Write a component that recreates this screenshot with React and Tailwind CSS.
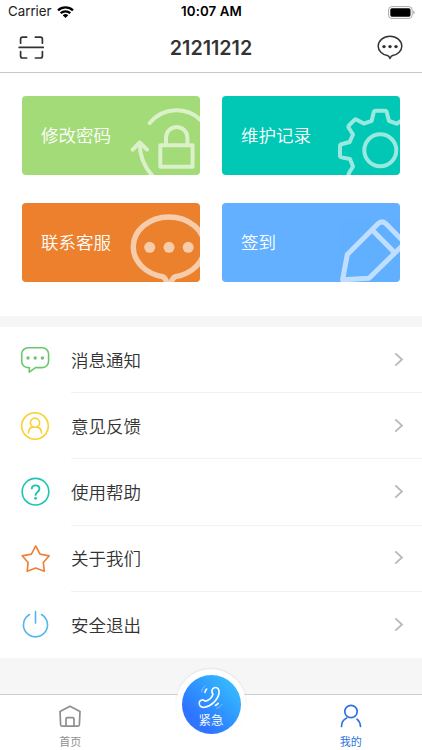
const cards = [
  { label: "修改密码", bg: "bg-[#a3db78]", art: LockArt },
  { label: "维护记录", bg: "bg-[#00c8b4]", art: GearArt },
  { label: "联系客服", bg: "bg-[#ec802d]", art: ChatArt },
  { label: "签到", bg: "bg-[#62b0ff]", art: PencilArt },
];

const rows = [
  { label: "消息通知", icon: MessageIcon },
  { label: "意见反馈", icon: FeedbackIcon },
  { label: "使用帮助", icon: HelpIcon },
  { label: "关于我们", icon: StarIcon },
  { label: "安全退出", icon: PowerIcon },
];

// faded drawing in the right part of a card, cut off by the card edge
function Art({ children }) {
  return (
    <svg
      className="absolute top-0 right-0 h-[79px] w-[78px] opacity-60"
      viewBox="0 0 78 79"
      fill="none"
      stroke="#fff"
      strokeWidth="4"
      strokeLinecap="round"
      strokeLinejoin="round"
    >
      {children}
    </svg>
  );
}

function LockArt() {
  return (
    <Art>
      <path d="M27.7 27A34.6 34.6 0 0 1 80 25.5" />
      <path d="M10.7 53.7l7-7.2 7.3 7.2M17.7 47.5C17.7 61 23 72 31.5 81" />
      <path d="M38.3 49.3h32.3v21.4H38.3zM44 49.3v-7.6a10.7 10.7 0 0 1 21.4 0v7.6" />
    </Art>
  );
}

function GearArt() {
  return (
    <Art>
      <circle cx="58.3" cy="54.3" r="16" />
      <path d="M26 81l1-4 4-6.5-3-7.5-8.5-1.6q-1.5-.4-1.5-1.9v-9.3q0-1.5 1.5-1.9l8.2-2.3 3.3-7.5-4.3-6.8q-.7-1.2.2-2.2l5.6-5.6q1-.9 2.2-.2l7.1 3.9 7.9-2.8 2-8.6q.4-1.5 1.9-1.5h9.3q1.5 0 1.9 1.5l2.1 8.6 7.7 2.9 8-4.8" />
    </Art>
  );
}

function ChatArt() {
  return (
    <Art>
      <path
        strokeWidth="5.4"
        d="M40.5 73.6C23.5 70.5 11.3 58.5 11.3 43.7 11.3 27.3 27.3 14 47 14s35.7 13.3 35.7 29.7c0 14.8-12.2 26.8-29.2 29.9q-3 1-4.5 6.4h-4q-1.5-5.4-4.5-6.4z"
      />
      <g fill="#fff" stroke="none">
        <circle cx="27.7" cy="44.3" r="5.5" />
        <circle cx="47" cy="44.3" r="5.5" />
        <circle cx="66.2" cy="44.3" r="5.5" />
      </g>
    </Art>
  );
}

function PencilArt() {
  return (
    <Art>
      <path
        strokeWidth="5"
        d="M82 39L63.500 20.300q-3.500-3-7 0L25.300 51.500 20.600 76.800 47 75.300 82 41M51.700 28.500L72 49"
      />
    </Art>
  );
}

function MessageIcon() {
  return (
    <svg className="size-[30px]" viewBox="0 0 30 30" fill="none" stroke="#67c96b" strokeWidth="1.6" strokeLinejoin="round">
      <path d="M8 2.800h14.300a6.300 6.300 0 0 1 6.300 6.300v7.200a6.300 6.300 0 0 1-6.300 6.300h-6.800L9.300 27.200v-4.600H8a6.300 6.300 0 0 1-6.300-6.300V9.100A6.300 6.300 0 0 1 8 2.800z" />
      <g fill="#67c96b" stroke="none">
        <circle cx="8" cy="13" r="1.7" />
        <circle cx="15.2" cy="13" r="1.7" />
        <circle cx="22.4" cy="13" r="1.7" />
      </g>
    </svg>
  );
}

function FeedbackIcon() {
  return (
    <svg className="size-[30px]" viewBox="0 0 30 30" fill="none" stroke="#fad02f" strokeWidth="1.6" strokeLinecap="round">
      <circle cx="15" cy="15" r="13.3" />
      <circle cx="15" cy="11.7" r="4.6" />
      <path d="M8.500 22c0-3.500 2.300-5.600 4.600-6.100M21.500 22c0-3.500-2.300-5.600-4.600-6.100" />
    </svg>
  );
}

function HelpIcon() {
  return (
    <svg className="size-[30px]" viewBox="0 0 30 30" fill="none" stroke="#20c4b2" strokeWidth="1.6">
      <circle cx="15.5" cy="14.7" r="13.3" />
      <path strokeWidth="1.900" d="M11.700 12.300c0-2.500 1.600-3.900 3.800-3.900s3.900 1.400 3.900 3.500c0 3-3.800 3-3.800 6.100v.8" />
      <circle cx="15.6" cy="21.3" r="1.4" fill="#20c4b2" stroke="none" />
    </svg>
  );
}

function StarIcon() {
  return (
    <svg className="size-[30px]" viewBox="0 0 30 30" fill="none" stroke="#ed8238" strokeWidth="1.700" strokeLinejoin="round">
      <path d="M15.700 1.900l4.300 8.300 9.200 1.600-5.900 6.700 1 8.700-8.600-3.200-8.500 3.200.9-8.700-5.900-6.700 9.200-1.600z" />
    </svg>
  );
}

function PowerIcon() {
  return (
    <svg className="size-[30px]" viewBox="0 0 30 30" fill="none" stroke="#52b5ef" strokeWidth="1.600" strokeLinecap="round">
      <path d="M15.500 1.500v11.600M9.500 4.500a12 12 0 1 0 12 0" />
    </svg>
  );
}

function ActionCard({ label, bg, art: CardArt }) {
  return (
    <div className={`relative flex h-[79px] items-center overflow-hidden rounded-[4px] pl-[19px] ${bg}`}>
      <span className="pt-px text-[17.5px] leading-6 font-[350] text-white">{label}</span>
      <CardArt />
    </div>
  );
}

function MenuRow({ label, icon: Icon, last }) {
  return (
    <div className="flex h-[66.2px] pl-5">
      <div className="flex w-[51px] items-center">
        <Icon />
      </div>
      <div className={`flex flex-1 items-center justify-between pr-[18px] ${last ? "" : "border-b border-[#f2f2f2]"}`}>
        <span className="pt-[2px] text-[17.5px] leading-6 font-[350] text-[#333]">{label}</span>
        <svg className="h-4 w-[10px]" viewBox="0 0 10 16" fill="none" stroke="#b9b9b9" strokeWidth="1.8">
          <path d="M1.300 1.300L8 7.500l-6.700 6.200" />
        </svg>
      </div>
    </div>
  );
}

function StatusBar() {
  return (
    <div className="grid h-6 grid-cols-3 items-center pr-[7px] pl-2 text-[13.3px] text-black">
      <div className="flex items-center gap-[5px]">
        <span className="text-[#222]">Carrier</span>
        <svg className="h-3 w-[17px]" viewBox="0 0 17 12" fill="none" stroke="#000" strokeWidth="2.3">
          <path d="M1 4.300a11 11 0 0 1 15 0M3.700 7.200a7 7 0 0 1 9.600 0" />
          <path d="M8.500 12L5.700 9.200a4.100 4.100 0 0 1 5.600 0z" fill="#000" stroke="none" />
        </svg>
      </div>
      <span className="text-center font-semibold tracking-[0.1px] whitespace-nowrap">10:07 AM</span>
      <svg className="h-[13px] w-[27px] justify-self-end" viewBox="0 0 27 13">
        <rect x=".6" y=".6" width="23.6" height="11.8" rx="3.3" fill="none" stroke="#aaa" />
        <rect x="2.3" y="2.3" width="20.2" height="8.4" rx="1.6" />
        <path d="M25.300 4.500q1.400.6 1.400 2t-1.400 2z" fill="#aaa" />
      </svg>
    </div>
  );
}

function NavBar() {
  return (
    <div className="flex h-[49px] items-center justify-between border-b border-[#c8c8c8] pr-[19px] pl-[18px]">
      <svg className="h-[26px] w-[26px]" viewBox="0 0 26 26" fill="none" stroke="#333" strokeWidth="1.7" strokeLinecap="round">
        <path d="M2.600 8.200V4.200q0-2 2-2h4M17.400 2.200h5q2 0 2 2v4M2.600 16.500v4.500q0 2 2 2h4M24.400 16.500v4.500q0 2-2 2h-5M1.200 12.400h24.200" />
      </svg>
      <h1 className="pt-px pl-px text-[19.7px] font-semibold text-[#333]">21211212</h1>
      <svg className="h-[26px] w-[26px]" viewBox="0 0 26 26" fill="none" stroke="#333" strokeWidth="1.5" strokeLinejoin="round">
        <path d="M10.400 20.600C5.200 19.700 1.200 15.800 1.200 11.200 1.200 5.700 6.500 1.200 13 1.200s11.800 4.500 11.800 10c0 4.600-4 8.500-9.200 9.400-1.200.3-1.900 1.300-2.600 2.900-.7-1.600-1.400-2.600-2.600-2.900z" />
        <g fill="#333" stroke="none">
          <circle cx="7" cy="11.6" r="1.7" />
          <circle cx="13" cy="11.6" r="1.7" />
          <circle cx="19" cy="11.6" r="1.7" />
        </g>
      </svg>
    </div>
  );
}

function TabBar() {
  return (
    <div className="relative grid h-14 grid-cols-3 border-t border-[#cfcfcf] bg-white text-[11px] leading-4">
      <div className="flex flex-col items-center gap-[6px] pt-[9px] text-[#8f8f8f]">
        <svg className="size-6" viewBox="0 0 24 24" fill="none" stroke="currentColor" strokeWidth="1.7" strokeLinejoin="round">
          <path d="M12 2.200L22 7.400l-.6 13.100q-.1 1.700-1.800 1.700H4.400q-1.700 0-1.800-1.700L2 7.400z" />
          <path d="M8 22v-7q0-1.300 1.300-1.300h5.400q1.300 0 1.300 1.300v7" />
        </svg>
        首页
      </div>
      <div />
      <div className="flex flex-col items-center gap-[6px] pt-[9px] pr-[2px] text-[#2f73e0]">
        <svg className="size-6" viewBox="0 0 24 24" fill="none" stroke="currentColor" strokeWidth="1.7" strokeLinecap="round">
          <circle cx="12" cy="7.5" r="6.2" />
          <path d="M2.500 22.500c0-4 2-6.800 5.200-8.400M18 15.200c2.100 1.700 3.300 4.200 3.500 7.300" />
        </svg>
        我的
      </div>
      {/* emergency button, sticks out above the bar */}
      <div className="absolute -top-[26px] left-1/2 flex size-[70px] -translate-x-1/2 items-center justify-center rounded-full bg-white shadow-[0_-1px_2px_rgba(0,0,0,0.08)]">
        <div className="flex size-[59px] flex-col items-center rounded-full bg-linear-to-tr from-[#2f74ff] from-25% to-[#3dc8fc] pt-[9px] text-[12.5px] leading-4 font-[350] text-white">
          <svg className="h-[29px] w-[28px] shrink-0" viewBox="0 0 28 29" fill="none" stroke="#fff" strokeWidth="1.6" strokeLinecap="round" strokeLinejoin="round">
            <path d="M16 10.200C14.200 8 14.500 4.800 17.300 3.700c3.500-1 5.300 2 4.800 5.200C21 15.800 14 22.400 7.500 23.300c-3.900.4-6-2.200-5.100-5.200 1-2.600 3.800-2.900 5.800-.9 3.500-.8 6.700-3.600 7.800-7z" />
            <path d="M8 8.500c.1-1.400.6-2.500 1.600-3.400M18.300 21.500c1.200-.5 2.200-1.200 2.900-2.200" />
            <path opacity=".35" strokeWidth="1" d="M4.600 8c.3-2.700 1.600-4.800 3.700-6.200M19.500 24.300c2.500-.5 4.300-1.900 5.400-4" />
          </svg>
          <span>紧急</span>
        </div>
      </div>
    </div>
  );
}

export default function App() {
  return (
    <div className="flex h-[750px] w-[422px] flex-col overflow-hidden bg-[#f6f6f6] font-['Inter','Noto_Sans_CJK_SC',sans-serif]">
      <div className="bg-white">
        <StatusBar />
        <NavBar />
        <div className="grid grid-cols-2 gap-x-[22px] gap-y-7 px-[22px] pt-[23px] pb-[34px]">
          {cards.map((card) => (
            <ActionCard key={card.label} {...card} />
          ))}
        </div>
      </div>
      <div className="mt-[11px] bg-white">
        {rows.map((row, i) => (
          <MenuRow key={row.label} {...row} last={i === rows.length - 1} />
        ))}
      </div>
      <div className="flex-1" />
      <TabBar />
    </div>
  );
}
